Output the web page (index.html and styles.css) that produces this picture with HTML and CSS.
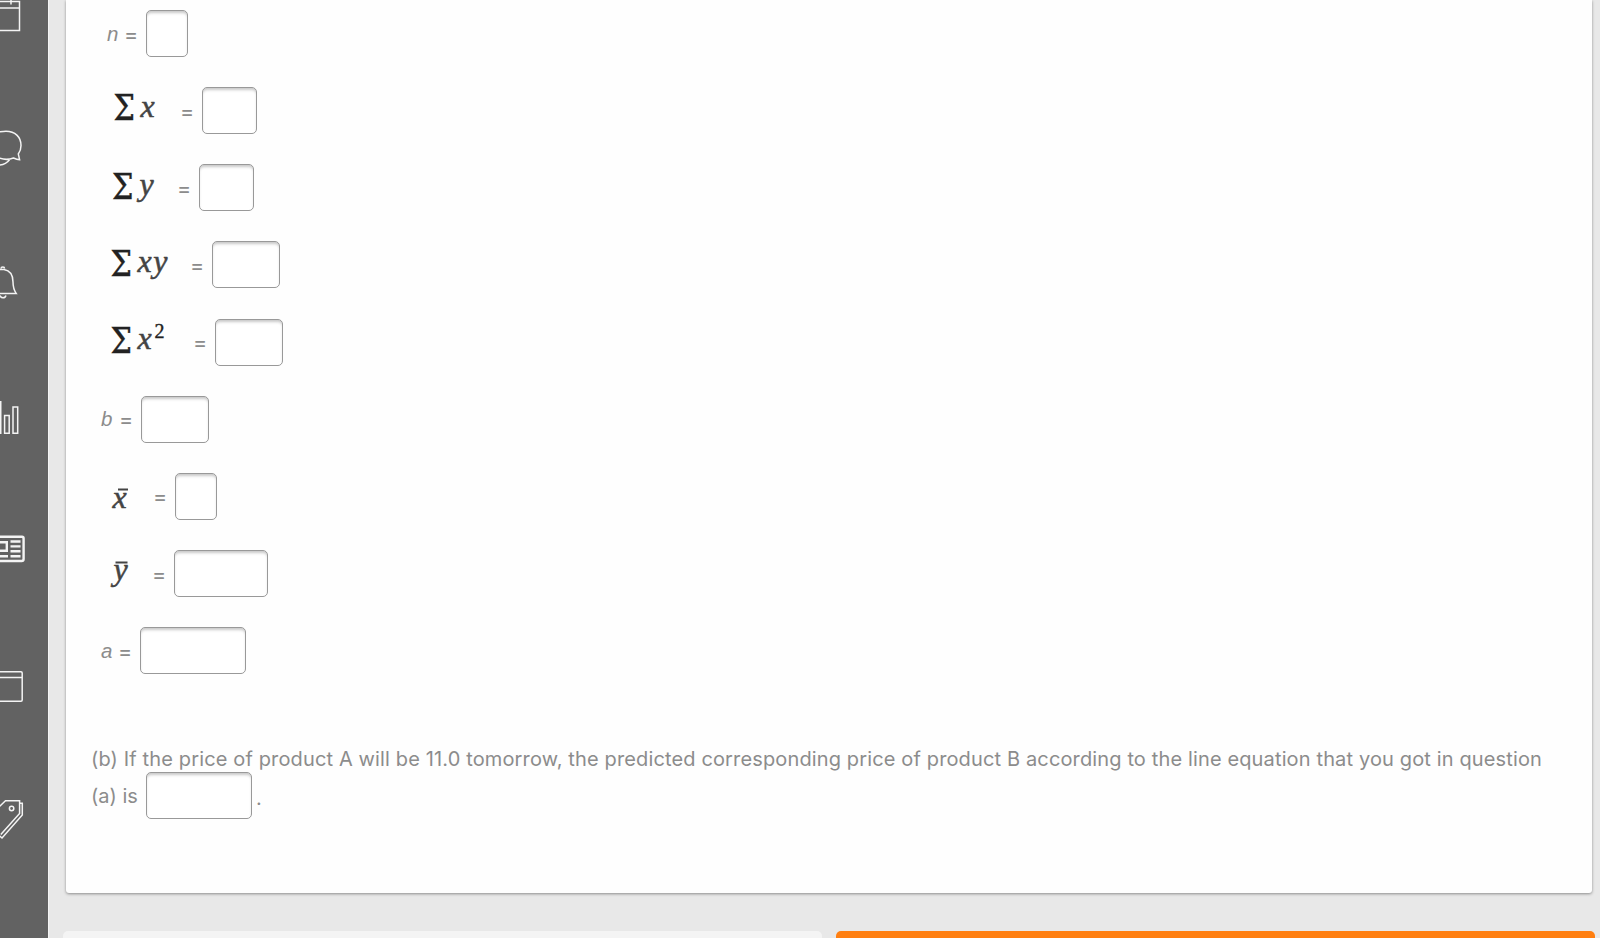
FILE: index.html
```html
<!DOCTYPE html>
<html lang="en">

<head>
    <meta charset="UTF-8">
    <title>Question</title>
    <link rel="stylesheet" href="styles.css">
</head>

<body>
    <nav class="sidebar">
        <svg class="icon" viewBox="0 0 48 48"><path d="M-2 8.5H19.5V37.5H-2M-2 15H19.5M11 0V11.5"/></svg>
        <svg class="icon" viewBox="0 0 48 48"><path d="M-1 5C2 4.4 4 4.2 6 4.2C15 4.2 21 10 21 18.5C21 22.5 19.8 25 18.3 27L19.6 32.7C17 32.6 15 31.7 13.5 31C9 32.8 4 32.8 -1 31M-1 38C4 37.8 7 36 9.5 32.7"/></svg>
        <svg class="icon" viewBox="0 0 48 48"><path d="M-1 8.5H4C10 9.5 13 14 13 21C13 27 14.5 30 16.3 32.6H-1M0 34.5a3.2 3.6 0 0 0 6 0M1 7.5a1.8 1.4 0 0 1 3.6 0"/></svg>
        <svg class="icon" viewBox="0 0 48 48"><path class="fill" d="M0 6H1.5V39H0Z"/><path d="M4.6 20.5H9.2V38.3H4.6ZM13 12H17.7V38.3H13Z"/></svg>
        <svg class="icon" viewBox="0 0 48 48"><path class="thick" d="M-2 7.8H22A1.6 1.6 0 0 1 23.6 9.4V30A2 2 0 0 1 21.6 32H-2"/><path class="thick" d="M-2 13.2H6.8V21.8H-2M-2 27.2H8M10.5 12.5H20.5M10.5 17.4H20.5M10.5 22.3H20.5M10.5 27.2H20.5"/></svg>
        <svg class="icon" viewBox="0 0 48 48"><path d="M-2 8.8H21A1.2 1.2 0 0 1 22.2 10V37A1.2 1.2 0 0 1 21 38.2H-2M-2 14.5H22"/></svg>
        <svg class="icon" viewBox="0 0 48 48"><path d="M-1 10L5.5 3.8H19.6V16.5L.8 37.5M20 6.3H22.3V18L2 41L-1 38.5"/><circle cx="11.6" cy="11.5" r="2.2"/></svg>
    </nav>

    <main class="content">
        <section class="card">
            <div class="row">
                <span class="label label-n"><i>n</i></span>
                <span class="eq">=</span>
                <input type="text" class="w42">
            </div>
            <div class="row">
                <svg class="math" width="90" height="47">
                    <text class="sigma" x="22.5" y="32.5" textLength="21.5" lengthAdjust="spacingAndGlyphs">Σ</text>
                    <text class="var" x="49.5" y="29.5">x</text>
                </svg>
                <span class="eq">=</span>
                <input type="text" class="w55">
            </div>
            <div class="row">
                <svg class="math" width="87" height="47">
                    <text class="sigma" x="21" y="34.5" textLength="21.5" lengthAdjust="spacingAndGlyphs">Σ</text>
                    <text class="var" x="48.5" y="30.5">y</text>
                </svg>
                <span class="eq">=</span>
                <input type="text" class="w55">
            </div>
            <div class="row">
                <svg class="math" width="100" height="47">
                    <text class="sigma" x="19.5" y="34.5" textLength="21.5" lengthAdjust="spacingAndGlyphs">Σ</text>
                    <text class="var" x="46.5" y="31" textLength="30">xy</text>
                </svg>
                <span class="eq">=</span>
                <input type="text" class="w68">
            </div>
            <div class="row">
                <svg class="math" width="103" height="47">
                    <text class="sigma" x="19.5" y="33.5" textLength="21.5" lengthAdjust="spacingAndGlyphs">Σ</text>
                    <text class="var" x="46.5" y="30">x</text>
                    <text class="power" x="63.5" y="19">2</text>
                </svg>
                <span class="eq">=</span>
                <input type="text" class="w68">
            </div>
            <div class="row">
                <span class="label label-b"><i>b</i></span>
                <span class="eq">=</span>
                <input type="text" class="w68">
            </div>
            <div class="row">
                <svg class="math" width="63" height="47">
                    <text class="var" x="21.5" y="34.5">x</text>
                    <path class="bar" d="M27 16.5H37"/>
                </svg>
                <span class="eq">=</span>
                <input type="text" class="w42">
            </div>
            <div class="row">
                <svg class="math" width="62" height="47">
                    <text class="var" x="22.5" y="30">y</text>
                    <path class="bar" d="M24.5 12.5H36.5"/>
                </svg>
                <span class="eq">=</span>
                <input type="text" class="w94">
            </div>
            <div class="row">
                <span class="label label-a"><i>a</i></span>
                <span class="eq">=</span>
                <input type="text" class="w106">
            </div>

            <div class="question">
                <div class="line">(b) If the price of product A will be 11.0 tomorrow, the predicted corresponding price of product B according to the line equation that you got in question</div>
                <div class="answer">
                    <span class="is">(a) is</span>
                    <input type="text" class="w106">
                    <span class="dot">.</span>
                </div>
            </div>
        </section>

        <div class="buttons">
            <button type="button" class="btn"></button>
            <button type="button" class="btn btn-orange"></button>
        </div>
    </main>
</body>

</html>
```

FILE: styles.css
```css
* {
    box-sizing: border-box;
}

body {
    margin: 0;
    height: 938px;
    display: flex;
    overflow: hidden;
    background-color: #e8e8e8;
    color: #8c8c8c;
    font-family: Inter, "Liberation Sans", sans-serif;
    font-size: 20px;
}

.sidebar {
    width: 48px;
    height: 938px;
    flex: none;
    overflow: hidden;
    background-color: #626262;
    box-shadow: 1px 0 0 #f4f4f4;
}

.icon {
    display: block;
    width: 48px;
    height: 48px;
    margin-bottom: 86px;
    fill: none;
    stroke: #f4f4f4;
    stroke-width: 1.5;
}

.icon:first-child {
    margin-top: -7px;
}

.icon .thick {
    stroke-width: 2.4;
}

.icon .fill {
    fill: #f4f4f4;
    stroke: none;
}

.content {
    flex: 1;
    padding: 0 5px 0 15px;
}

.card {
    height: 893px;
    margin: 0 3px;
    padding: 10px 25px 0;
    background-color: #fefefe;
    border-radius: 0 0 3px 3px;
    box-shadow: 0 1px 3px rgba(0, 0, 0, 0.4);
}

.row {
    display: flex;
    height: 47px;
    margin-bottom: 30.17px;
    align-items: center;
}

.label {
    line-height: 24px;
}

.label i {
    font-family: "Liberation Sans", sans-serif;
    font-size: 20.5px;
}

.label-n {
    width: 34px;
    padding-left: 16px;
}

.label-b {
    width: 29px;
    padding-left: 10px;
}

.label-a {
    width: 28px;
    padding-left: 10px;
}

.eq {
    width: 21px;
    font-size: 21.5px;
    line-height: 24px;
    text-indent: -1px;
}

.math {
    flex: none;
    overflow: visible;
    fill: #222;
}

.sigma {
    font: 35px "DejaVu Serif", serif;
    stroke: #222;
    stroke-width: 0.4;
}

.var {
    font: italic 32px "Liberation Serif", serif;
    fill: #444;
    stroke: #444;
    stroke-width: 0.5;
}

.power {
    font: 20px "Liberation Serif", serif;
    stroke: #222;
    stroke-width: 0.4;
}

.bar {
    stroke: #444;
    stroke-width: 2;
}

input {
    height: 47px;
    padding: 0 8px;
    border: 1.5px solid #999;
    border-radius: 5px;
    background-color: #fff;
    box-shadow: inset 0 3px 3px -1px #c8c8c8;
}

.w42 {
    width: 42px;
}

.w55 {
    width: 55px;
}

.w68 {
    width: 68px;
}

.w94 {
    width: 94px;
}

.w106 {
    width: 106px;
}

.question {
    margin-top: 73px;
}

.line {
    height: 25px;
    line-height: 24px;
    letter-spacing: 0.137px;
    white-space: nowrap;
}

.answer {
    display: flex;
    align-items: center;
}

.is {
    width: 55px;
}

.dot {
    margin-left: 4px;
    padding-top: 4px;
}

.buttons {
    display: flex;
    gap: 14px;
    margin-top: 38px;
}

.btn {
    flex: 1;
    height: 50px;
    border: 0;
    border-radius: 5px;
    background-color: #f4f4f4;
}

.btn-orange {
    background-color: #ff7f11;
}
```
